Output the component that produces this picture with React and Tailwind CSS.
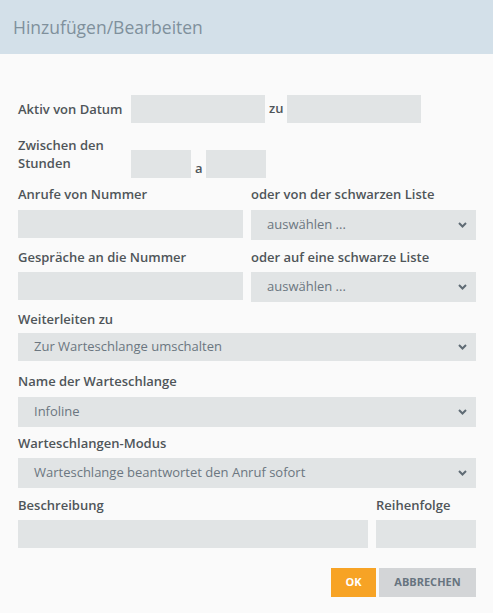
import React from 'react';

// --- Small pieces ---
const Label = ({ children, className = '' }) => (
  <div className={`text-[13px] leading-[18px] font-semibold text-[#4f5559] ${className}`}>{children}</div>
);

const Field = ({ className = '' }) => (
  <div className={`h-[28px] bg-[#e1e4e5] ${className}`} />
);

const Chevron = () => (
  <svg width="9" height="6" viewBox="0 0 9 6" className="shrink-0">
    <polyline points="1,1 4.5,4.5 8,1" fill="none" stroke="#5f6b74" strokeWidth="2" />
  </svg>
);

const Select = ({ value, className = '' }) => (
  <div className={`h-[30px] bg-[#e1e4e5] flex items-center justify-between pl-[16px] pr-[9px] ${className}`}>
    <span className="text-[13px] text-[#6b7680]">{value}</span>
    <Chevron />
  </div>
);

export default function App() {
  return (
    <div className="w-[493px] h-[613px] bg-[#fafafa] font-['Open_Sans',sans-serif] overflow-hidden">
      {/* Header */}
      <div className="h-[54px] bg-[#d3e0e9] flex items-center pl-[13px]">
        <h2 className="text-[17.5px] text-[#7f909c] font-normal">Hinzufügen/Bearbeiten</h2>
      </div>

      <div className="pl-[18px] pr-[17px] pt-[41px]">
        {/* Aktiv von Datum */}
        <div className="flex items-center">
          <Label className="w-[113px]">Aktiv von Datum</Label>
          <Field className="w-[134px]" />
          <span className="text-[13px] font-semibold text-[#4f5559] ml-[4px] mr-[4px]">zu</span>
          <Field className="w-[134px]" />
        </div>

        {/* Zwischen den Stunden */}
        <div className="flex items-end mt-[13px]">
          <Label className="w-[113px] pb-[6px]">Zwischen den<br />Stunden</Label>
          <Field className="w-[60px]" />
          <span className="text-[13px] font-semibold text-[#4f5559] ml-[4px] mr-[3px]">a</span>
          <Field className="w-[60px]" />
        </div>

        {/* Nummer / Liste */}
        <div className="grid grid-cols-2 gap-x-[8px] mt-[7px]">
          <div>
            <Label className="mb-[7px]">Anrufe von Nummer</Label>
            <Field />
          </div>
          <div>
            <Label className="mb-[7px]">oder von der schwarzen Liste</Label>
            <Select value="auswählen ..." />
          </div>
        </div>

        <div className="grid grid-cols-2 gap-x-[8px] mt-[8px]">
          <div>
            <Label className="mb-[6px]">Gespräche an die Nummer</Label>
            <Field />
          </div>
          <div>
            <Label className="mb-[6px]">oder auf eine schwarze Liste</Label>
            <Select value="auswählen ..." />
          </div>
        </div>

        {/* Weiterleiten */}
        <div className="mt-[8px]">
          <Label className="mb-[5px]">Weiterleiten zu</Label>
          <Select value="Zur Warteschlange umschalten" className="!h-[28px]" />
        </div>

        <div className="mt-[11px]">
          <Label className="mb-[7px]">Name der Warteschlange</Label>
          <Select value="Infoline" />
        </div>

        <div className="mt-[7px]">
          <Label className="mb-[6px]">Warteschlangen-Modus</Label>
          <Select value="Warteschlange beantwortet den Anruf sofort" />
        </div>

        {/* Beschreibung / Reihenfolge */}
        <div className="flex gap-x-[8px] mt-[8px]">
          <div className="flex-1">
            <Label className="mb-[6px]">Beschreibung</Label>
            <Field />
          </div>
          <div className="w-[100px]">
            <Label className="mb-[6px]">Reihenfolge</Label>
            <Field />
          </div>
        </div>

        {/* Buttons */}
        <div className="flex justify-end gap-x-[3px] mt-[20px]">
          <button className="w-[45px] h-[29px] bg-[#f7a325] text-white text-[11px] font-bold">OK</button>
          <button className="w-[97px] h-[29px] bg-[#d3d5d7] text-[#67747f] text-[11px] font-bold">ABBRECHEN</button>
        </div>
      </div>
    </div>
  );
}
